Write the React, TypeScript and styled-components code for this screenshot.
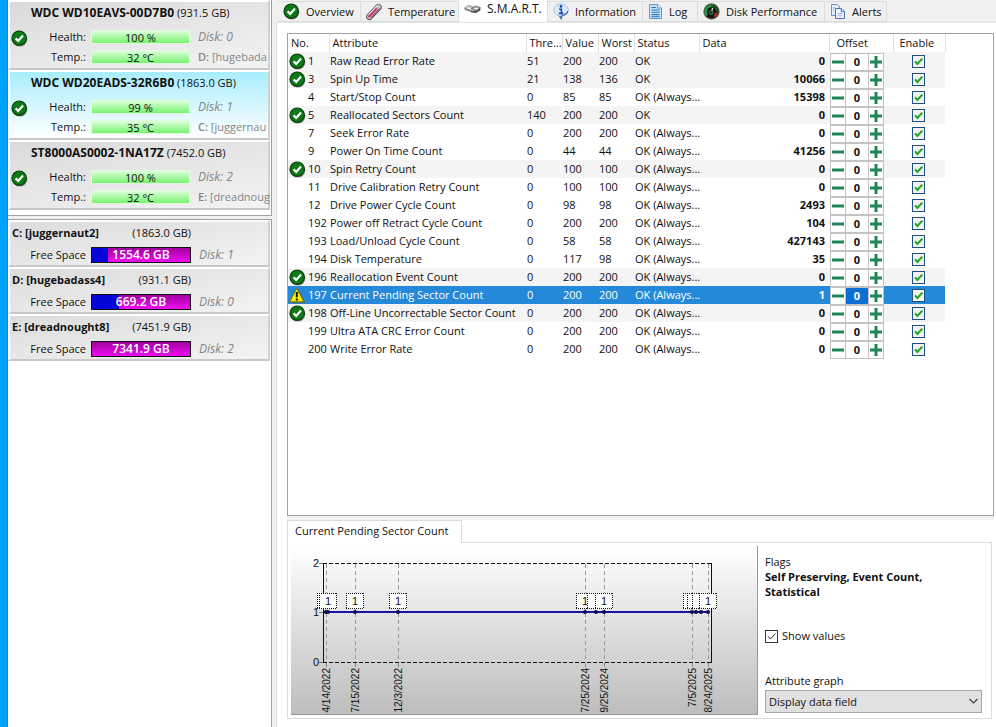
import React, { useState } from "react";
import styled, { createGlobalStyle, css } from "styled-components";

const uiFont = '"Open Sans", "Noto Sans", sans-serif';

const GlobalStyle = createGlobalStyle`
  *, *::before, *::after { box-sizing: border-box; }
  body { margin: 0; background: #f0f0f0; color: #111; font: 11px/16px ${uiFont}; }
  button, input, select { font: inherit; color: inherit; margin: 0; padding: 0; }
`;

/* ---------- shell ---------- */

const Shell = styled.div`
  display: grid;
  grid-template-columns: 8px 264px minmax(0, 1fr);
  min-height: 100vh;
`;

const DesktopEdge = styled.div`
  background: #00a5fb;
  border-right: 1px solid #45799b;
`;

const Sidebar = styled.aside`
  display: flex;
  flex-direction: column;
  gap: 3px;
`;

const SidePanel = styled.section<{ $fill?: boolean }>`
  background: #fff;
  border: solid #a0a0a0;
  border-width: ${(p) => (p.$fill ? "1px 1px 0 0" : "0 1px 1px 0")};
  padding: 0 1px ${(p) => (p.$fill ? 0 : 5)}px 0;
  flex: ${(p) => (p.$fill ? 1 : "none")};
`;

const Card = styled.article<{ $active?: boolean; $short?: boolean }>`
  height: ${(p) => (p.$short ? 47 : 70)}px;
  white-space: nowrap;
  border: 2px solid #fff;
  border-right-color: #cfcfcf;
  border-bottom-color: #c8c8c8;
  background: ${(p) =>
    p.$active
      ? "linear-gradient(to bottom, #a9edfd, #fff)"
      : "linear-gradient(170deg, #dadada, #f3f3f3)"};
  ${(p) => p.$short && css`background: linear-gradient(170deg, #dcdcdc, #f3f3f3);`}
`;

const DiskTitle = styled.h2`
  margin: 0;
  padding: 3px 0 6px 21px;
  font-size: 11px;
  line-height: 16px;
  font-weight: 400;
  b { font-weight: 700; font-size: 12px; line-height: 16px; }
`;

const DiskBody = styled.div`
  display: grid;
  grid-template-columns: 18px 63px 99px 1fr;
  grid-template-rows: 20px 20px;
  align-items: center;
  & > svg { align-self: end; margin-left: 1px; }
`;

const Label = styled.span`
  text-align: right;
  padding-right: 5px;
`;

const Meter = styled.div`
  height: 14px;
  border: 1px solid #e4fbe0;
  line-height: 13px;
  text-align: center;
  background: linear-gradient(to bottom, #dcffdb, #77f36f);
`;

const Note = styled.span<{ $italic?: boolean }>`
  color: #858585;
  padding-left: 8px;
  font-size: ${(p) => (p.$italic ? 12 : 11)}px;
  font-style: ${(p) => (p.$italic ? "italic" : "normal")};
  b { font-weight: 600; }
`;

const DriveTitle = styled.div`
  display: flex;
  justify-content: space-between;
  width: 181px;
  padding: 3px 0 6px 2px;
  b { font-weight: 700; }
`;

const DriveBody = styled.div`
  display: grid;
  grid-template-columns: 81px 100px 1fr;
  align-items: center;
`;

const SpaceBar = styled.div`
  height: 16px;
  border: 1px solid #111;
  color: #fff;
  font-weight: 600;
  font-size: 12px;
  line-height: 14px;
  text-align: center;
`;

/* ---------- tabs ---------- */

const Main = styled.main`
  display: flex;
  flex-direction: column;
  min-width: 0;
  padding-left: 4px;
`;

const Tabs = styled.nav`
  display: flex;
  height: 22px;
  padding-left: 2px;
  align-items: flex-end;
`;

const Tab = styled.button<{ $w: number; $on?: boolean }>`
  width: ${(p) => p.$w}px;
  height: ${(p) => (p.$on ? 22 : 21)}px;
  display: flex;
  align-items: center;
  gap: 6px;
  padding: 0 0 ${(p) => (p.$on ? 4 : 0)}px 5px;
  border: 1px solid #dcdcdc;
  border-left-width: 0;
  border-bottom-width: ${(p) => (p.$on ? 0 : 1)}px;
  border-top-width: ${(p) => (p.$on ? 0 : 1)}px;
  background: ${(p) => (p.$on ? "#fff" : "#f0f0f0")};
  font-size: ${(p) => (p.$on ? 12 : 11)}px;
  line-height: 16px;
  white-space: nowrap;
  svg { flex: none; }
`;

const Page = styled.div`
  flex: 1;
  display: flex;
  flex-direction: column;
  background: #fff;
  border-left: 1px solid #dcdcdc;
  border-top: 1px solid #e4e4e4;
  padding: 10px 2px 0 10px;
`;

/* ---------- attribute table ---------- */

const TableBox = styled.div`
  flex: 1;
  border: 1px solid #a0a0a0;
  min-height: 340px;
`;

const Table = styled.table`
  width: 657px;
  table-layout: fixed;
  border-collapse: collapse;
  th, td { padding: 0; text-align: left; white-space: nowrap; font-weight: 400; }
`;

const Th = styled.th<{ $pad?: number }>`
  height: 18px;
  line-height: 18px;
  && { padding-left: ${(p) => p.$pad ?? 3}px; }
  border-right: 1px solid #e2e2e2;
`;

const Tr = styled.tr<{ $tone: "plain" | "shaded" | "picked" }>`
  height: 18px;
  background: ${(p) => ({ plain: "#fff", shaded: "#f4f4f4", picked: "#2589da" })[p.$tone]};
  color: ${(p) => (p.$tone === "picked" ? "#fff" : "#111")};
`;

const Td = styled.td`
  && { padding-left: 1px; }
  line-height: 16px;
`;

const DataCell = styled.td`
  && { text-align: right; padding-right: 4px; font-weight: 700; }
`;

const NumCell = styled.div`
  display: grid;
  grid-template-columns: 19px 1fr;
  align-items: center;
  height: 18px;
`;

const Spinner = styled.div`
  display: grid;
  grid-template-columns: 16px 22px 16px;
  height: 16px;
  width: 54px;
`;

const StepButton = styled.button`
  display: grid;
  place-items: center;
  background: #fff;
  border: 1px solid #c3c3c3;
`;

const OffsetInput = styled.input<{ $on?: boolean }>`
  width: 22px;
  min-width: 0;
  border: solid #c3c3c3;
  border-width: 1px 0;
  text-align: center;
  && { font-weight: 700; }
  background: ${(p) => (p.$on ? "#0b70d1" : "#fff")};
  color: ${(p) => (p.$on ? "#fff" : "#111")};
`;

const tick = (color: string, width: number) =>
  `url("data:image/svg+xml,%3Csvg xmlns='http://www.w3.org/2000/svg' viewBox='0 0 11 11'%3E%3Cpath d='M2 5.3L4.4 8L9.3 2.6' fill='none' stroke='${encodeURIComponent(color)}' stroke-width='${width}'/%3E%3C/svg%3E")`;

const Check = styled.input<{ $green?: boolean }>`
  appearance: none;
  flex: none;
  display: block;
  width: 13px;
  height: 13px;
  background-color: ${(p) => (p.$green ? "#f1f4f1" : "#fff")};
  border: 1px solid ${(p) => (p.$green ? "#1d4f7f" : "#333")};
  &:checked { background-image: ${(p) => (p.$green ? tick("#21a121", 2) : tick("#333333", 1))}; }
`;

const CheckSlot = styled.div`
  padding-left: 18px;
`;

/* ---------- lower pane ---------- */

const Splitter = styled.div`
  height: 4px;
  background: #f0f0f0;
`;

const LowerTab = styled.button`
  align-self: flex-start;
  width: 175px;
  height: 23px;
  margin-bottom: -1px;
  padding: 0 6px 2px 7px;
  text-align: left;
  z-index: 1;
  background: #fff;
  border: 1px solid #dcdcdc;
  border-bottom: 0;
  white-space: nowrap;
`;

const LowerPage = styled.section`
  display: flex;
  border: 1px solid #dcdcdc;
  margin: 0 2px 8px 0;
  padding: 3px;
  height: 177px;
`;

const ChartPane = styled.div`
  flex: 1;
  overflow: hidden;
  border-right: 1px solid #999;
  border-bottom: 1px solid #999;
  background: linear-gradient(to bottom, #fff, #bdbdbd);
  svg { display: block; }
`;

const Options = styled.div`
  width: 230px;
  padding: 8px 6px 0 7px;
  display: flex;
  flex-direction: column;
`;

const Flags = styled.p`
  margin: 0 0 28px;
  line-height: 15px;
  b { display: block; font-weight: 700; width: 180px; }
`;

const CheckLabel = styled.label`
  display: flex;
  align-items: center;
  gap: 4px;
  height: 18px;
  margin-bottom: 27px;
`;

const FieldLabel = styled.label`
  line-height: 17px;
`;

const SelectWrap = styled.div`
  display: grid;
  align-items: center;
  margin-top: 1px;
  & > * { grid-area: 1 / 1; }
  svg { justify-self: end; margin-right: 3px; pointer-events: none; }
`;

const Select = styled.select`
  appearance: none;
  width: 100%;
  height: 23px;
  padding-left: 3px;
  border: 1px solid #a6a6a6;
  border-radius: 0;
  background: #e1e1e1;
`;

/* ---------- icons ---------- */

const OkIcon = () => (
  <svg width="17" height="17" viewBox="0 0 17 17" aria-hidden="true">
    <circle cx="9" cy="9.2" r="7.4" fill="#9a9a9a" />
    <circle cx="8.2" cy="8.2" r="7.2" fill="#0b7a17" stroke="#063d0a" strokeWidth="1.2" />
    <path d="M4.6 8.4L7.2 10.9L12 5.6" fill="none" stroke="#fff" strokeWidth="2.2" />
  </svg>
);

const WarnIcon = () => (
  <svg width="17" height="17" viewBox="0 0 17 17" aria-hidden="true">
    <path d="M9 2.2L16.6 16H2z" fill="#6b6b54" />
    <path d="M7.7 1.4L14.9 14.8H.7z" fill="#fff200" stroke="#77720a" strokeWidth="1" strokeLinejoin="round" />
    <path d="M7.8 5v5.2M7.8 11.4v2" stroke="#111" strokeWidth="2" />
  </svg>
);

const ThermoIcon = () => (
  <svg width="16" height="18" viewBox="0 0 16 18" aria-hidden="true">
    <path d="M3.4 13.8L12.4 4.2" stroke="#5a4650" strokeWidth="6.6" strokeLinecap="round" />
    <path d="M3.4 13.6L12.4 4" stroke="#c3bfc6" strokeWidth="5" strokeLinecap="round" />
    <path d="M3.2 13.4L10 6" stroke="#c43a78" strokeWidth="2.4" strokeLinecap="round" />
    <path d="M5.2 14.6L13.6 5.6" stroke="#6c3350" strokeWidth="1" />
    <path d="M2.6 11.8L11.4 2.6" stroke="#fff" strokeWidth=".9" />
  </svg>
);

const DriveIcon = () => (
  <svg width="17" height="12" viewBox="0 0 17 12" aria-hidden="true">
    <path d="M.5 5L4.5 2.2L10.5 4.6L6.4 7.4z" fill="#c7c7c7" stroke="#858585" strokeWidth=".7" />
    <path d="M.5 5v1.6L6.4 9V7.4z" fill="#777" />
    <path d="M7.2 5.4L11.6 3L16.4 4.6L12.6 8z" fill="#a9a9a9" stroke="#555" strokeWidth=".7" />
    <path d="M6.6 7.6L12.6 8L16.4 4.8v2.4L12 10L6.8 9.2z" fill="#454545" />
    <path d="M3 4.8l4 1.2M10 5.4l4 .3" stroke="#fff" />
  </svg>
);

const InfoIcon = () => (
  <svg width="16" height="17" viewBox="0 0 16 17" aria-hidden="true">
    <path d="M8 1C3.8 1 .8 3.6.8 7c0 2.6 1.8 4.6 4.6 5.5L8.2 16l1.2-3.4c3.6-.5 5.9-2.8 5.9-5.6C15.3 3.6 12.2 1 8 1z" fill="#dcebfb" stroke="#a9bfd8" />
    <path d="M14.8 8c-.6 2.4-2.4 3.9-5.6 4.4L8.2 15.6L6.6 12.6" fill="none" stroke="#3f6fae" strokeWidth="1.3" />
    <circle cx="8" cy="3.4" r="1.4" fill="#1648b6" />
    <path d="M6 6.3h2.4v4M5.8 10.4h4.6" stroke="#1648b6" strokeWidth="1.6" fill="none" />
  </svg>
);

const LogIcon = () => (
  <svg width="15" height="17" viewBox="0 0 15 17" aria-hidden="true">
    <path d="M1.5 1.5h8.2L13.5 5v10.5h-12z" fill="#c5e4fa" stroke="#5b9bcb" />
    <path d="M9.6 1.6V5h3.8" fill="#fff" stroke="#5b9bcb" />
    <path d="M3.4 4.5h4.4M3.4 7h8.2M3.4 9.3h8.2M3.4 11.6h8.2M3.4 13.8h8.2" stroke="#2b76b8" strokeWidth="1.1" />
  </svg>
);

const GaugeIcon = () => (
  <svg width="17" height="17" viewBox="0 0 17 17" aria-hidden="true">
    <circle cx="8.5" cy="8.5" r="7.6" fill="#151515" stroke="#6b6b62" strokeWidth="1.2" />
    <path d="M4.3 12.4A5.6 5.6 0 0 1 8.5 2.9" fill="none" stroke="#18a548" strokeWidth="2" />
    <path d="M8.5 2.9a5.6 5.6 0 0 1 5.4 6.8" fill="none" stroke="#2a8b45" strokeWidth="1.6" strokeDasharray="1.5 .8" />
    <path d="M13.7 10a5.6 5.6 0 0 1-2.8 3.4" fill="none" stroke="#d3322b" strokeWidth="1.8" />
    <path d="M8.2 10.2L9.6 5" stroke="#e7f4e5" strokeWidth="1.2" />
    <circle cx="8.3" cy="9.6" r="2.4" fill="#3d6b48" />
    <circle cx="8.3" cy="9.6" r="1" fill="#111" />
  </svg>
);

const CopyIcon = () => (
  <svg width="16" height="17" viewBox="0 0 16 17" aria-hidden="true">
    <path d="M1.5 1.5h5.6L9.5 4v8.5h-8z" fill="#e4effd" stroke="#6e8fc6" />
    <path d="M5.5 5.5h5.8L14.5 8.4v7.1h-9z" fill="#f3f8ff" stroke="#4b70b3" />
    <path d="M11.2 5.6v3h3.2" fill="#cfe0f8" stroke="#4b70b3" />
    <path d="M3 5h2.4M3 7.4h1.4M7.4 10.6h5M7.4 12.8h5" stroke="#8cabdc" />
  </svg>
);

const Minus = () => (
  <svg width="12" height="12" viewBox="0 0 12 12" aria-hidden="true">
    <path d="M0 6h12" stroke="#1f8456" strokeWidth="3" />
  </svg>
);

const Plus = () => (
  <svg width="12" height="12" viewBox="0 0 12 12" aria-hidden="true">
    <path d="M0 6h12M6 0v12" stroke="#1f8456" strokeWidth="3" />
  </svg>
);

/* ---------- data ---------- */

const disks = [
  { name: "WDC WD10EAVS-00D7B0", size: "(931.5 GB)", health: "100 %", temp: "32 °C", disk: "Disk: 0", letter: "D:", vol: "[hugebada" },
  { name: "WDC WD20EADS-32R6B0", size: "(1863.0 GB)", health: "99 %", temp: "35 °C", disk: "Disk: 1", letter: "C:", vol: "[juggernau", active: true },
  { name: "ST8000AS0002-1NA17Z", size: "(7452.0 GB)", health: "100 %", temp: "32 °C", disk: "Disk: 2", letter: "E:", vol: "[dreadnoug" },
];

const drives = [
  { name: "C: [juggernaut2]", size: "(1863.0 GB)", free: "1554.6 GB", used: 16.5, disk: "Disk: 1" },
  { name: "D: [hugebadass4]", size: "(931.1 GB)", free: "669.2 GB", used: 28, disk: "Disk: 0" },
  { name: "E: [dreadnought8]", size: "(7451.9 GB)", free: "7341.9 GB", used: 0, disk: "Disk: 2" },
];

const tabs = [
  { label: "Overview", w: 83, icon: <OkIcon /> },
  { label: "Temperature", w: 98, icon: <ThermoIcon /> },
  { label: "S.M.A.R.T.", w: 89, icon: <DriveIcon />, on: true },
  { label: "Information", w: 95, icon: <InfoIcon /> },
  { label: "Log", w: 55, icon: <LogIcon /> },
  { label: "Disk Performance", w: 127, icon: <GaugeIcon /> },
  { label: "Alerts", w: 62, icon: <CopyIcon /> },
];

type Mark = "ok" | "warn" | "";
const rows: [Mark, number, string, number, number, number, string, string][] = [
  ["ok", 1, "Raw Read Error Rate", 51, 200, 200, "OK", "0"],
  ["ok", 3, "Spin Up Time", 21, 138, 136, "OK", "10066"],
  ["", 4, "Start/Stop Count", 0, 85, 85, "OK (Always...", "15398"],
  ["ok", 5, "Reallocated Sectors Count", 140, 200, 200, "OK", "0"],
  ["", 7, "Seek Error Rate", 0, 200, 200, "OK (Always...", "0"],
  ["", 9, "Power On Time Count", 0, 44, 44, "OK (Always...", "41256"],
  ["ok", 10, "Spin Retry Count", 0, 100, 100, "OK (Always...", "0"],
  ["", 11, "Drive Calibration Retry Count", 0, 100, 100, "OK (Always...", "0"],
  ["", 12, "Drive Power Cycle Count", 0, 98, 98, "OK (Always...", "2493"],
  ["", 192, "Power off Retract Cycle Count", 0, 200, 200, "OK (Always...", "104"],
  ["", 193, "Load/Unload Cycle Count", 0, 58, 58, "OK (Always...", "427143"],
  ["", 194, "Disk Temperature", 0, 117, 98, "OK (Always...", "35"],
  ["ok", 196, "Reallocation Event Count", 0, 200, 200, "OK (Always...", "0"],
  ["warn", 197, "Current Pending Sector Count", 0, 200, 200, "OK (Always...", "1"],
  ["ok", 198, "Off-Line Uncorrectable Sector Count", 0, 200, 200, "OK (Always...", "0"],
  ["", 199, "Ultra ATA CRC Error Count", 0, 200, 200, "OK (Always...", "0"],
  ["", 200, "Write Error Rate", 0, 200, 200, "OK (Always...", "0"],
];

const columns = [41, 197, 36, 36, 36, 65, 130, 64, 52];

/* ---------- chart ---------- */

const dates = [
  { x: 35, text: "4/14/2022" },
  { x: 64, text: "7/15/2022" },
  { x: 107, text: "12/3/2022" },
  { x: 294, text: "7/25/2024" },
  { x: 313, text: "9/25/2024" },
  { x: 401, text: "7/5/2025" },
  { x: 417, text: "8/24/2025" },
];
const flagBoxes = [
  { x: 35, t: "" }, { x: 37, t: "1" }, { x: 64, t: "1" }, { x: 107, t: "1" },
  { x: 294, t: "1" }, { x: 305, t: "" }, { x: 313, t: "1" },
  { x: 401, t: "" }, { x: 405, t: "" }, { x: 410, t: "" }, { x: 417, t: "1" },
];
const points = [35, 37, 64, 107, 294, 305, 313, 401, 405, 410, 417];

const Chart = ({ showValues }: { showValues: boolean }) => (
  <svg width="466" height="170" viewBox="0 1 466 170" fontFamily="Liberation Sans, Arial, sans-serif" fontSize="11" fill="#111" role="img" aria-label="Current Pending Sector Count over time">
    {dates.map((d) => (
      <g key={d.text}>
        <path d={`M${d.x + 0.5} 19V117`} stroke="#999" strokeDasharray="4 3" />
        <path d={`M${d.x + 0.5} 118v4`} stroke="#888" />
        <text transform={`translate(${d.x + 4} 123) rotate(-90)`} textAnchor="end" fontSize="10">{d.text}</text>
      </g>
    ))}
    <path d="M32 18.5H420M32 117.5H420" stroke="#111" strokeDasharray="4 2" />
    <path d="M32.5 18V118M420.5 18V118" stroke="#111" />
    <path d="M28 18.5h4M28 67.5h4M28 117.5h4" stroke="#777" />
    <text x="28" y="22" textAnchor="end">2</text>
    <text x="28" y="71" textAnchor="end">1</text>
    <text x="28" y="121" textAnchor="end">0</text>
    <path d="M33 67H418" stroke="#1515a0" strokeWidth="2" />
    {points.map((x) => (
      <circle key={x} cx={x} cy="67" r="2" fill="#0b0b4e" />
    ))}
    {showValues &&
      flagBoxes.map((b) => (
        <g key={b.x}>
          <rect x={b.x - 9} y="48" width="18" height="16" fill="#fff" />
          <path
            d={`M${b.x - 9} 48.5h18M${b.x - 9} 63.5h18M${b.x - 8.5} 48v16M${b.x + 8.5} 48v16`}
            stroke="#111"
            strokeDasharray="1 1"
            shapeRendering="crispEdges"
          />
          <text x={b.x} y="60" textAnchor="middle">{b.t}</text>
        </g>
      ))}
  </svg>
);

/* ---------- app ---------- */

export default function App() {
  const [showValues, setShowValues] = useState(true);
  return (
    <>
      <GlobalStyle />
      <Shell>
        <DesktopEdge />
        <Sidebar>
          <SidePanel>
            {disks.map((d) => (
              <Card key={d.name} $active={d.active}>
                <DiskTitle><b>{d.name}</b> {d.size}</DiskTitle>
                <DiskBody>
                  <OkIcon />
                  <Label>Health:</Label>
                  <Meter>{d.health}</Meter>
                  <Note $italic>{d.disk}</Note>
                  <span />
                  <Label>Temp.:</Label>
                  <Meter>{d.temp}</Meter>
                  <Note><b>{d.letter}</b> {d.vol}</Note>
                </DiskBody>
              </Card>
            ))}
          </SidePanel>
          <SidePanel $fill>
            {drives.map((d) => (
              <Card key={d.name} $short>
                <DriveTitle><b>{d.name}</b><span>{d.size}</span></DriveTitle>
                <DriveBody>
                  <Label>Free Space</Label>
                  <SpaceBar
                    style={{
                      background: `linear-gradient(to right, #0505d8 ${d.used}%, transparent ${d.used}%), linear-gradient(to bottom, #a0009f, #f00cf0)`,
                    }}
                  >
                    {d.free}
                  </SpaceBar>
                  <Note $italic>{d.disk}</Note>
                </DriveBody>
              </Card>
            ))}
          </SidePanel>
        </Sidebar>
        <Main>
          <Tabs>
            {tabs.map((t) => (
              <Tab key={t.label} type="button" $w={t.w} $on={t.on}>
                {t.icon}
                {t.label}
              </Tab>
            ))}
          </Tabs>
          <Page>
            <TableBox>
              <Table>
                <colgroup>
                  {columns.map((w, i) => <col key={i} width={w} />)}
                </colgroup>
                <thead>
                  <tr>
                    <Th>No.</Th>
                    <Th>Attribute</Th>
                    <Th>Thre...</Th>
                    <Th>Value</Th>
                    <Th>Worst</Th>
                    <Th>Status</Th>
                    <Th>Data</Th>
                    <Th $pad={7}>Offset</Th>
                    <Th $pad={6}>Enable</Th>
                  </tr>
                </thead>
                <tbody>
                  {rows.map(([mark, id, name, threshold, value, worst, status, data]) => (
                    <Tr key={id} $tone={mark === "warn" ? "picked" : mark ? "shaded" : "plain"}>
                      <Td>
                        <NumCell>
                          {mark === "ok" ? <OkIcon /> : mark === "warn" ? <WarnIcon /> : <span />}
                          {id}
                        </NumCell>
                      </Td>
                      <Td>{name}</Td>
                      <Td>{threshold}</Td>
                      <Td>{value}</Td>
                      <Td>{worst}</Td>
                      <Td>{status}</Td>
                      <DataCell>{data}</DataCell>
                      <Td>
                        <Spinner>
                          <StepButton type="button" aria-label={`Decrease offset of ${name}`}><Minus /></StepButton>
                          <OffsetInput $on={mark === "warn"} defaultValue="0" aria-label={`Offset of ${name}`} />
                          <StepButton type="button" aria-label={`Increase offset of ${name}`}><Plus /></StepButton>
                        </Spinner>
                      </Td>
                      <Td>
                        <CheckSlot>
                          <Check $green type="checkbox" defaultChecked aria-label={`Enable ${name}`} />
                        </CheckSlot>
                      </Td>
                    </Tr>
                  ))}
                </tbody>
              </Table>
            </TableBox>
            <Splitter />
            <LowerTab type="button">Current Pending Sector Count</LowerTab>
            <LowerPage>
              <ChartPane>
                <Chart showValues={showValues} />
              </ChartPane>
              <Options>
                <Flags>
                  Flags
                  <b>Self Preserving, Event Count, Statistical</b>
                </Flags>
                <CheckLabel>
                  <Check type="checkbox" checked={showValues} onChange={(e) => setShowValues(e.target.checked)} />
                  Show values
                </CheckLabel>
                <FieldLabel htmlFor="graph">Attribute graph</FieldLabel>
                <SelectWrap>
                  <Select id="graph" defaultValue="data">
                    <option value="data">Display data field</option>
                  </Select>
                  <svg width="11" height="7" viewBox="0 0 11 7" aria-hidden="true">
                    <path d="M1.5 1L5.5 5L9.5 1" fill="none" stroke="#444" strokeWidth="1.2" />
                  </svg>
                </SelectWrap>
              </Options>
            </LowerPage>
          </Page>
        </Main>
      </Shell>
    </>
  );
}
